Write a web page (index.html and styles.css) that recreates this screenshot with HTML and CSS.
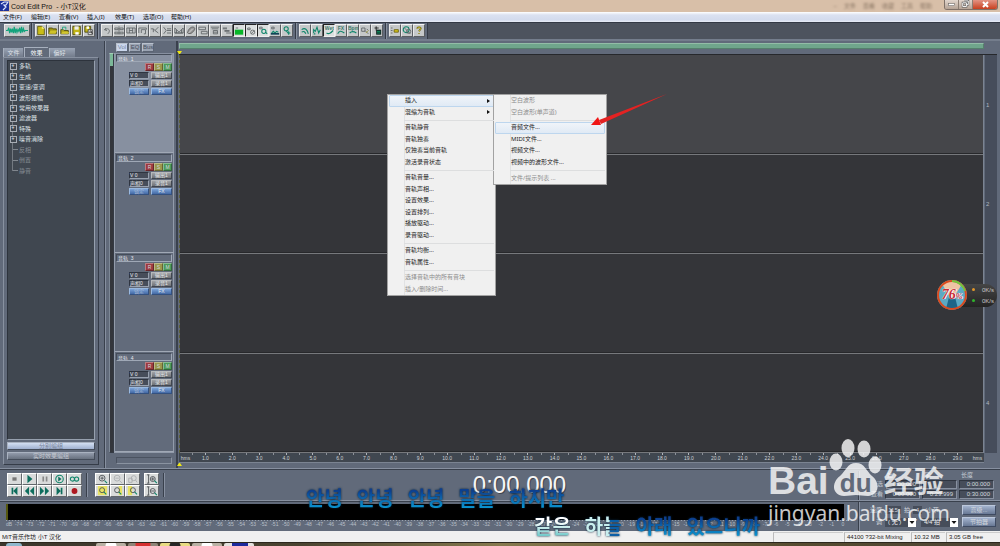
FILE: index.html
```html
<!DOCTYPE html>
<html lang="zh-CN">
<head>
<meta charset="utf-8">
<title>Cool Edit Pro - 小T汉化</title>
<link rel="stylesheet" href="styles.css">
</head>
<body>
<header class="titlebar">
  <svg class="app-icon" viewBox="0 0 9 10"><rect width="9" height="10" fill="#1c2f9a"/><path d="M1 3l3-2h4L6 4H4l2 2-3 3" fill="none" stroke="#dfe6ff" stroke-width="1.2"/></svg>
  <h1>Cool Edit Pro &nbsp;- 小T汉化</h1>
  <div class="ghost"><span>–</span><span>文件</span><span>查看</span><span>收藏</span><span>工具</span><span>帮助</span></div>
  <div class="win-buttons">
    <button aria-label="最小化"><svg viewBox="0 0 14 9"><rect x="4" y="4" width="6" height="2" fill="#fff" stroke="#555" stroke-width=".5"/></svg></button>
    <button aria-label="还原"><svg viewBox="0 0 14 9"><path d="M6 1h4v4H8M4 3h4v4H4z" fill="none" stroke="#555" stroke-width="2"/><path d="M6 1h4v4H8M4 3h4v4H4z" fill="none" stroke="#fff"/></svg></button>
    <button class="close" aria-label="关闭"><svg viewBox="0 0 24 9"><path d="M10 2l5 5M15 2l-5 5" stroke="#fff" stroke-width="2"/></svg></button>
  </div>
</header>
<nav class="menubar">
  <button>文件(F)</button><button>编辑(E)</button><button>查看(V)</button><button>插入(I)</button><button>效果(T)</button><button>选项(O)</button><button>帮助(H)</button>
</nav>
<div class="toolbar">
  <div class="tools first">
    <button class="wide" aria-label="波形"><svg viewBox="0 0 26 12"><path d="M1 6h2l1-3 1 6 1-5 1 4 1-4 1 5 1-7 1 7 1-5 1 4 1-3 1 2 1-4 1 6 1-7 1 6 1-4 1 3 1-1h3" fill="none" stroke="#12a37c" stroke-width="1.3"/></svg></button>
  </div>
  <div class="tools">
    <button aria-label="新建"><svg viewBox="0 0 12 12"><path d="M2 1h5l3 3v7H2z" fill="#c9bd18" stroke="#5d5710"/><path d="M7 1v3h3" fill="#fff67a"/></svg></button>
    <button aria-label="打开"><svg viewBox="0 0 12 12"><path d="M1 3h4l1 1h4v6H1z" fill="#9f9412" stroke="#4b460a"/><path d="M3 6h8l-2 4H1z" fill="#cfc228"/></svg></button>
    <button aria-label="追加"><svg viewBox="0 0 12 12"><path d="M1 5h3l1 1h5v4H1z" fill="#b9ad1c" stroke="#4b460a"/><path d="M3 5V2h4v3" fill="none" stroke="#14a37d"/><path d="M3 8h8l-1 2H1z" fill="#ddd238"/></svg></button>
    <button aria-label="保存"><svg viewBox="0 0 12 12"><path d="M1 1h9v10H1z" fill="#c2b618" stroke="#4b460a"/><path d="M3 1h5v4H3z" fill="#eee"/><path d="M4 8h4v3H4z" fill="#fff"/></svg></button>
    <button aria-label="全部保存"><svg viewBox="0 0 12 12"><path d="M1 1h7v7H1z" fill="#c2b618" stroke="#4b460a"/><path d="M3 1h3v3H3z" fill="#fff"/><path d="M5 5h5v6H5z" fill="#ddd" stroke="#444"/><path d="M6 8h3M8 6l2 4" stroke="#222"/></svg></button>
  </div>
  <div class="tools">
    <button aria-label="撤销"><svg viewBox="0 0 12 12"><path d="M3 5l2-2M3 5l3 1M3 5c5-3 8 1 4 5" class="g"/></svg></button>
    <button aria-label="中心"><svg viewBox="0 0 12 12"><path d="M1 3h4v2H1zM7 3h4v2H7zM1 8h4v2H1zM7 8h4v2H7zM6 1v10" class="g"/></svg></button>
    <button aria-label="选择"><svg viewBox="0 0 12 12"><path d="M1 3h10v6H1zM4 3v6M8 3v6M4 6h4" class="g"/></svg></button>
    <button aria-label="修剪"><svg viewBox="0 0 12 12"><path d="M1 9V3h9v2M4 9V5h5v5H7" class="g"/></svg></button>
    <button aria-label="分割"><svg viewBox="0 0 12 12"><path d="M1 4h3l2 2 4-4M6 6l4 3M4 4v4" class="g"/></svg></button>
    <button aria-label="合并"><svg viewBox="0 0 12 12"><path d="M2 2l3 4-3 4M6 4h5M6 6h5M6 9h5" class="g"/></svg></button>
    <button aria-label="淡化"><svg viewBox="0 0 12 12"><path d="M1 9V3l5 5 5-5v6zM1 9h10M3 5v4M9 5v4" class="g"/></svg></button>
    <button aria-label="擦除"><svg viewBox="0 0 12 12"><path d="M2 9c0-4 4-8 7-7s1 4-1 6-4 2-6 1z" fill="#999" stroke="#555"/><path d="M3 9l5-5" stroke="#ddd"/></svg></button>
    <button aria-label="编组"><svg viewBox="0 0 12 12"><path d="M1 2h8v3H1zM4 7h7v3H4z" class="g"/></svg></button>
    <button aria-label="锁定"><svg viewBox="0 0 12 12"><path d="M1 2h10M2 4h8M4 6h5v4H4zM4 8h5" class="g"/></svg></button>
    <button aria-label="对齐"><svg viewBox="0 0 12 12"><path d="M1 3h5M3 6h6M5 9h6M1 4h5M3 7h6" class="g"/></svg></button>
    <button class="on" aria-label="音块"><svg viewBox="0 0 12 12"><rect x="1" y="5" width="10" height="6" fill="#08b629"/><path d="M2 3h3" class="g"/></svg></button>
    <button class="on" aria-label="循环"><svg viewBox="0 0 12 12"><path d="M2 3h3v2H2z" class="g"/><circle cx="8" cy="8" r="2.5" class="g"/><path d="M6 10l4-4" class="g"/></svg></button>
    <button class="on" aria-label="包络"><svg viewBox="0 0 12 12"><path d="M2 2h3v2H2z" class="g"/><circle cx="7" cy="7" r="2.5" class="t"/><path d="M9 8l2 2" class="t"/></svg></button>
    <button aria-label="增益"><svg viewBox="0 0 12 12"><path d="M2 2h3v2H2z" class="g"/><path d="M2 9l2-2 2 2 2-2 2 1" class="t"/><path d="M1 10h10" stroke="#145" stroke-width="2"/></svg></button>
    <button aria-label="查找"><svg viewBox="0 0 12 12"><circle cx="5" cy="4" r="2.5" class="t"/><path d="M5 6l2 3h3M8 7v4" class="t"/></svg></button>
  </div>
  <div class="tools">
    <button aria-label="混响"><svg viewBox="0 0 12 12"><path d="M2 5c4-3 7 0 8 5M2 8c3-2 4 0 5 2" class="t"/></svg></button>
    <button aria-label="音高"><svg viewBox="0 0 12 12"><path d="M2 9V5l2 2 2-5 2 7 2-4M2 10h2" class="t"/></svg></button>
    <button class="on" aria-label="混音"><svg viewBox="0 0 12 12"><text x="1" y="5">Wet</text><path d="M3 9c3 2 5 0 8-3" class="t"/></svg></button>
    <button aria-label="效果"><svg viewBox="0 0 12 12"><text x="2" y="5">FX</text><path d="M2 10c2-4 4-4 8-1" class="t"/></svg></button>
    <button aria-label="节拍"><svg viewBox="0 0 12 12"><text x="0" y="5">Bpm</text><path d="M2 9c2-2 5-2 8 0" class="t"/></svg></button>
    <button aria-label="交叉"><svg viewBox="0 0 12 12"><path d="M2 3h4v4H2zM6 6l4 4M8 4l2 2" class="g"/><path d="M7 9l3-3" stroke="#a6a030"/></svg></button>
    <button aria-label="输出"><svg viewBox="0 0 12 12"><path d="M3 3h5M5 1v5" stroke="#111"/><rect x="5" y="5" width="6" height="6" fill="#122"/><path d="M6 7h4M6 9h4" stroke="#0ca76a"/></svg></button>
  </div>
  <div class="tools">
    <button aria-label="属性"><svg viewBox="0 0 12 12"><path d="M1 3h2M1 6h2M1 9h2" class="g"/><path d="M5 5h5v3H5z" fill="#d4c31a" stroke="#665d10"/></svg></button>
    <button aria-label="光盘"><svg viewBox="0 0 12 12"><circle cx="5" cy="5" r="3.5" class="t"/><circle cx="8" cy="7" r="2.5" class="g"/><path d="M3 3l7 7" class="g"/></svg></button>
    <button aria-label="帮助"><svg viewBox="0 0 12 12"><path d="M4 4c0-3 5-2 4 0L6 7M6 9v1" fill="none" stroke="#695e13" stroke-width="2"/><path d="M4 4c0-3 5-2 4 0L6 7M6 9v1" fill="none" stroke="#d1c52c"/></svg></button>
  </div>
</div>

<main class="workspace">
  <aside class="organizer">
    <div class="tabs"><button>文件</button><button class="active">效果</button><button>偏好</button></div>
    <div class="pane">
      <div class="tree-box">
        <ul class="tree">
          <li class="node">多轨</li><li class="node">生成</li><li class="node">变速/变调</li><li class="node">波形振幅</li><li class="node">常用效果器</li><li class="node">滤波器</li><li class="node">特殊</li><li class="node">噪音消除</li><li>反相</li><li>倒置</li><li>静音</li>
        </ul>
      </div>
      <button class="bar lit">分别编组</button>
      <button class="bar">实时效果编组</button>
    </div>
  </aside>

  <section class="mixer">
    <div class="mix-tabs"><button class="active">Vol</button><button>EQ</button><button>Bus</button></div>
    <div class="strips">
      <div class="level"></div>
      <div class="strip-list">
        <div class="strip sel">
          <input value="音轨  1" aria-label="音轨 1 名称">
          <div class="rsm"><button class="r">R</button><button class="s">S</button><button class="m">M</button></div>
          <div class="knobs"><button class="dark">V 0</button><button>输出1</button><button class="dark">声相0</button><button>录音1</button><button class="blue dim">锁定</button><button class="blue">FX</button></div>
        </div>
        <div class="strip">
          <input value="音轨  2" aria-label="音轨 2 名称">
          <div class="rsm"><button class="r">R</button><button class="s">S</button><button class="m">M</button></div>
          <div class="knobs"><button class="dark">V 0</button><button>输出1</button><button class="dark">声相0</button><button>录音1</button><button class="blue dim">锁定</button><button class="blue">FX</button></div>
        </div>
        <div class="strip">
          <input value="音轨  3" aria-label="音轨 3 名称">
          <div class="rsm"><button class="r">R</button><button class="s">S</button><button class="m">M</button></div>
          <div class="knobs"><button class="dark">V 0</button><button>输出1</button><button class="dark">声相0</button><button>录音1</button><button class="blue dim">锁定</button><button class="blue">FX</button></div>
        </div>
        <div class="strip">
          <input value="音轨  4" aria-label="音轨 4 名称">
          <div class="rsm"><button class="r">R</button><button class="s">S</button><button class="m">M</button></div>
          <div class="knobs"><button class="dark">V 0</button><button>输出1</button><button class="dark">声相0</button><button>录音1</button><button class="blue dim">锁定</button><button class="blue">FX</button></div>
        </div>
      </div>
    </div>
    <div class="mix-scroll"></div>
  </section>

  <section class="session">
    <div class="overview"></div>
    <div class="marker top"></div>
    <div class="canvas">
      <div class="lanes"><div class="lane sel"></div><div class="lane"></div><div class="lane"></div><div class="lane"></div></div>
      <div class="lane-nums"><span>1</span><span>2</span><span>3</span><span>4</span></div>
    </div>
    <div class="ruler">
      <span class="unit">hms</span>
      <div class="marks"><i>1.0</i><i>2.0</i><i>3.0</i><i>4.0</i><i>5.0</i><i>6.0</i><i>7.0</i><i>8.0</i><i>9.0</i><i>10.0</i><i>11.0</i><i>12.0</i><i>13.0</i><i>14.0</i><i>15.0</i><i>16.0</i><i>17.0</i><i>18.0</i><i>19.0</i><i>20.0</i><i>21.0</i><i>22.0</i><i>23.0</i><i>24.0</i><i>25.0</i><i>26.0</i><i>27.0</i><i>28.0</i><i>29.0</i></div>
      <span class="unit">hms</span>
    </div>
    <div class="marker bottom"></div>
  </section>
</main>

<section class="transport">
  <div class="pad five">
    <button aria-label="停止"><svg viewBox="0 0 15 12"><rect x="5" y="4" width="5" height="4" fill="#777"/></svg></button>
    <button aria-label="播放"><svg viewBox="0 0 15 12"><path d="M5 1l6 5-6 5z" class="f"/></svg></button>
    <button aria-label="暂停"><svg viewBox="0 0 15 12"><path d="M5 3h2v6H5zM9 3h2v6H9z" fill="#888"/></svg></button>
    <button aria-label="播放到结尾"><svg viewBox="0 0 15 12"><circle cx="7.500" cy="6" r="4.500" class="t"/><path d="M6 3l4 3-4 3z" class="f"/></svg></button>
    <button aria-label="循环播放"><svg viewBox="0 0 15 12"><circle cx="5" cy="6" r="2.500" class="t" stroke-width="1.500"/><circle cx="10" cy="6" r="2.500" class="t" stroke-width="1.500"/></svg></button>
    <button aria-label="到开头"><svg viewBox="0 0 15 12"><path d="M4 2h2v8H4zM11 1v10L6 6z" class="f"/></svg></button>
    <button aria-label="倒带"><svg viewBox="0 0 15 12"><path d="M7 1v10L2 6zM13 1v10L8 6z" class="f"/></svg></button>
    <button aria-label="快进"><svg viewBox="0 0 15 12"><path d="M2 1v10l5-5zM8 1v10l5-5z" class="f"/></svg></button>
    <button aria-label="到结尾"><svg viewBox="0 0 15 12"><path d="M4 1v10l5-5zM9 2h2v8H9z" class="f"/></svg></button>
    <button aria-label="录音"><svg viewBox="0 0 15 12"><circle cx="7.500" cy="6" r="3.500" fill="#ad1820"/></svg></button>
  </div>
  <div class="pad three">
    <button aria-label="放大"><svg viewBox="0 0 15 12"><circle cx="7" cy="5" r="3.500" class="k"/><path d="M5 5h4M7 3v4" class="k"/><path d="M10 8l3 3" class="t"/></svg></button>
    <button aria-label="缩小"><svg viewBox="0 0 15 12"><circle cx="7" cy="5" r="3.500" class="l"/><path d="M5 5h4M10 8l3 3" class="l"/></svg></button>
    <button aria-label="全部"><svg viewBox="0 0 15 12"><circle cx="9" cy="5" r="3" class="l"/><path d="M3 5h4v5H3zM11 7l2 3" class="l"/></svg></button>
    <button aria-label="缩放选区"><svg viewBox="0 0 15 12"><rect x="2" y="0" width="11" height="11" fill="#e7e266"/><circle cx="7" cy="5" r="3" class="k"/><path d="M9 7l3 3" class="t"/></svg></button>
    <button aria-label="缩放左侧"><svg viewBox="0 0 15 12"><rect x="9" y="0" width="4" height="11" fill="#e7e266"/><circle cx="7" cy="5" r="3" class="k"/><path d="M9 7l3 3" class="t"/></svg></button>
    <button aria-label="缩放右侧"><svg viewBox="0 0 15 12"><rect x="2" y="0" width="5" height="11" fill="#e7e266"/><circle cx="8" cy="5" r="3" class="k"/><path d="M10 7l3 3" class="t"/></svg></button>
  </div>
  <div class="pad one">
    <button aria-label="垂直放大"><svg viewBox="0 0 15 12"><path d="M2 1h3M4 1v10M2 11h3" class="k"/><circle cx="9" cy="6" r="3" class="k"/><path d="M7 6h4M9 4v4" class="k"/><path d="M11 8l3 3" class="t"/></svg></button>
    <button aria-label="垂直缩小"><svg viewBox="0 0 15 12"><path d="M2 1h3M4 1v10M2 11h3" class="k"/><circle cx="9" cy="6" r="3" class="k"/><path d="M7 6h4" class="k"/><path d="M11 8l3 3" class="t"/></svg></button>
  </div>
  <output class="clock">0:00.000</output>
  <table class="times">
    <thead><tr><th></th><th>始</th><th>尾</th><th>长度</th></tr></thead>
    <tbody>
      <tr><th>选</th><td>0:00.000</td><td></td><td>0:00.000</td></tr>
      <tr><th>查看</th><td>0:00.000</td><td>0:29.999</td><td>0:30.000</td></tr>
    </tbody>
  </table>
</section>

<section class="meters">
  <div class="meter">
    <div class="meter-bar"></div>
    <div class="db"><b>dB</b><i>-74</i><i>-73</i><i>-72</i><i>-71</i><i>-70</i><i>-69</i><i>-68</i><i>-67</i><i>-66</i><i>-65</i><i>-64</i><i>-63</i><i>-62</i><i>-61</i><i>-60</i><i>-59</i><i>-58</i><i>-57</i><i>-56</i><i>-55</i><i>-54</i><i>-53</i><i>-52</i><i>-51</i><i>-50</i><i>-49</i><i>-48</i><i>-47</i><i>-46</i><i>-45</i><i>-44</i><i>-43</i><i>-42</i><i>-41</i><i>-40</i><i>-39</i><i>-38</i><i>-37</i><i>-36</i><i>-35</i><i>-34</i><i>-33</i><i>-32</i><i>-31</i><i>-30</i><i>-29</i><i>-28</i><i>-27</i><i>-26</i><i>-25</i><i>-24</i><i>-23</i><i>-22</i><i>-21</i><i>-20</i><i>-19</i><i>-18</i><i>-17</i><i>-16</i><i>-15</i><i>-14</i><i>-13</i><i>-12</i><i>-11</i><i>-10</i><i>-9</i><i>-8</i><i>-7</i><i>-6</i><i>-5</i><i>-4</i><i>-3</i><i>-2</i><i>-1</i><i>0</i></div>
  </div>
  <div class="tempo">
    <div class="line"><label for="bpm">速度</label><input id="bpm" value="115"><span>拍</span><input class="short" aria-label="小节" value="4"><span>/小节</span><button>高级...</button></div>
    <div class="line"><label for="key">调</label><select id="key"><option>( 无 )</option></select><select class="sig" aria-label="拍号"><option>4/4 拍</option></select><button>节拍器</button></div>
  </div>
</section>

<footer class="status"><span class="msg">MiT音乐作坊 小T 汉化</span><span class="blank"></span><span class="fmt">44100 ?32-bit Mixing</span><span class="mem">10.32 MB</span><span class="disk">3.05 GB free</span></footer>
<div class="taskbar"><span class="orb"></span><span class="task"></span><span class="task red"></span><span class="task gold"></span><span class="task"></span><span class="task navy"></span></div>

<div class="context">
  <ul class="menu">
    <li class="group two"><button class="hot sub">插入</button><button class="sub">混缩为音轨</button></li>
    <li class="group four"><button>音轨静音</button><button>音轨独奏</button><button>仅独奏当前音轨</button><button>激活录音状态</button></li>
    <li class="group six"><button>音轨音量...</button><button>音轨声相...</button><button>设置效果...</button><button>设置排列...</button><button>播放驱动...</button><button>录音驱动...</button></li>
    <li class="group two"><button>音轨均衡...</button><button>音轨属性...</button></li>
    <li class="group two"><button disabled>选择音轨中的所有音块</button><button disabled>插入/删除时间...</button></li>
  </ul>
  <ul class="menu submenu">
    <li class="group two"><button disabled>空白波形</button><button disabled>空白波形(单声道)</button></li>
    <li class="group four"><button class="hot">音频文件...</button><button>MIDI文件...</button><button>视频文件...</button><button>视频中的波形文件...</button></li>
    <li class="group single"><button disabled>文件/提示列表 ...</button></li>
  </ul>
  <svg class="arrow" viewBox="0 0 76 34"><path d="M76 0L8 26l2 4z" fill="#e32222"/><path d="M0 31l7-8 3 8z" fill="#f01616"/></svg>
</div>

<div class="gadget">
  <div class="rates"><span class="up">0K/s</span><span class="down">0K/s</span></div>
  <div class="dial"><svg viewBox="0 0 32 32"><circle cx="16" cy="16" r="15" fill="#5ba9c4"/><path d="M6 5q10-7 20 0l-8 13h-4z" fill="#efc3a4"/><path d="M13 18h6l3 12h-12z" fill="#1d6588"/><circle cx="16" cy="16" r="14" fill="none" stroke="#db4a1e" stroke-width="2"/><path d="M16 2a14 14 0 0 1 13 10" fill="none" stroke="#72c63f" stroke-width="2"/></svg><span>76<small>%</small></span></div>
</div>

<div class="watermark">
  <div class="brand"><span>Bai</span>
    <span class="paw"><svg viewBox="0 0 54 58"><ellipse cx="7" cy="23" rx="6.500" ry="8.500"/><ellipse cx="19" cy="9" rx="6.500" ry="9"/><ellipse cx="35" cy="10" rx="6.500" ry="8.500"/><ellipse cx="46" cy="26" rx="6.500" ry="8.500"/><path d="M27 24c9 0 10 8 16 13 8 6 8 19-4 20-5 0-8-1-12-1s-7 1-12 1C3 56 2 44 11 37c6-5 7-13 16-13z"/></svg><em>du</em></span>
    <span class="cn">经验</span></div>
  <div class="site">jingyan.baidu.com</div>
</div>

<div class="lyrics" lang="ko">
  <p><span>안녕</span><span>안녕</span><span>안녕</span><span>말을</span><span>하지만</span></p>
  <p class="next"><span class="sung">같은</span><span class="half">하늘</span><span>아래</span><span>있으니까</span></p>
</div>
</body>
</html>
```
FILE: styles.css
```css
* { box-sizing: border-box; }
html { height: 100%; }
body {
  margin: 0; min-height: 100%; position: relative; overflow: hidden;
  display: grid; grid-template-columns: minmax(0, 1fr);
  grid-template-rows: 12px 10px 19px 1fr 32px 30px 11px 4px;
  background: #616a7a; color: #d3d8df;
  font: 6px/8px "Liberation Sans", "Noto Sans CJK SC", sans-serif;
}
button, input, select { font: inherit; color: inherit; margin: 0; padding: 0; border: 0; border-radius: 0; background: none; min-width: 0; display: block; }
ul { list-style: none; margin: 0; padding: 0; }
svg { display: block; }
i, em { font-style: normal; }

.titlebar { display: flex; align-items: center; background: #d8bfa8; color: #111; }
.app-icon { width: 9px; height: 10px; }
.titlebar h1 { margin: 0 auto 0 2px; font: 7px/11px "Liberation Sans", "Noto Sans CJK SC", sans-serif; }
.ghost { display: flex; gap: 7px; margin-right: 12px; color: #8b7765; filter: blur(1px); }
.win-buttons { display: flex; align-self: flex-start; margin-right: 2px; border: 1px solid #7f7168; border-top: 0; border-radius: 0 0 3px 3px; overflow: hidden; }
.win-buttons button { width: 14px; height: 9px; background: linear-gradient(#e3d7ce, #b5a396); border-right: 1px solid #8b7d72; }
.win-buttons .close { width: 24px; border: 0; background: linear-gradient(#e39383, #c8401f); }

.menubar { display: flex; gap: 7px; padding-left: 3px; background: linear-gradient(#fff, #dbe1f0 30%, #d3dbed 80%, #e9edf6); color: #111; font-family: "Noto Sans", "Noto Sans CJK SC", sans-serif; }
.menubar button { font-size: 6px; line-height: 10px; width: 21px; white-space: nowrap; text-align: left; }

.toolbar { display: flex; background: #4d535e; border-bottom: 2px solid #747d8c; border-top: 1px solid #333945; }
.tools { display: flex; padding: 1px 2px; background: #616a7a; border-left: 1px solid #87909f; border-right: 1px solid #343a46; }
.tools.first { padding: 1px 1px 1px 4px; border-left: 0; }
.tools button { width: 12px; height: 13px; background: #c5c8c9; border: 1px solid; border-color: #f4f4f4 #5b5e62 #5b5e62 #e8e8e8; }
.tools .wide { width: 26px; }
.tools .on { background: #dcdfdf; border-color: #222 #eee #eee #222; }
.tools svg { width: 100%; height: 100%; }
.tools text { font: bold 6px "Liberation Sans", sans-serif; fill: #3d7a6b; }
.g { fill: none; stroke: #5d6164; }
.t { fill: none; stroke: #10866b; stroke-width: 1.3; }
.k { fill: none; stroke: #474b4f; }
.l { fill: none; stroke: #a8abad; }
.f { fill: #0d6d5d; }

.workspace { display: grid; grid-template-columns: 105px 73px minmax(0, 1fr); min-height: 0; border-bottom: 1px solid #8790a0; }

.organizer { display: flex; flex-direction: column; padding: 6px 5px 3px 3px; border-right: 1px solid #39404c; }
.tabs { display: flex; gap: 1px; align-items: flex-end; height: 10px; }
.tabs button { width: 20px; height: 9px; background: linear-gradient(#99a3b4, #737c8b); border-left: 1px solid #a7b0be; color: #dde1e7; }
.tabs .active { width: 24px; height: 10px; background: #616a7a; color: #f4f6f8; border-top: 1px solid #a7b0be; }
.tabs button:last-child { width: 26px; padding-right: 6px; }
.pane { flex: 1; display: flex; flex-direction: column; gap: 2px; padding: 2px 3px 4px; border: 1px solid #8891a0; border-right-color: #353c48; border-bottom-color: #353c48; }
.tree-box { flex: 1; background: #404750; border: 1px solid #2d333c; border-right: 1px solid #96a0ae; border-bottom: 1px solid #96a0ae; }
.tree { height: 115px; margin-left: 2px; display: flex; flex-direction: column; position: relative; }
.tree li { flex: 1; display: flex; align-items: center; gap: 2px; color: #858b93; }
.tree li::before { content: ""; width: 5px; height: 1px; margin-left: 3px; margin-right: -1px; background: #80868e; }
.tree .node { color: #dde1e6; }
.tree .node::before { content: "+"; width: 5px; height: 5px; margin: 0; border: 1px solid #a8adb5; background: #404750; font: bold 5px/3px "Liberation Sans", sans-serif; text-align: center; z-index: 1; text-indent: -1px; }
.tree::before { content: ""; position: absolute; left: 2px; top: 5px; bottom: 5px; width: 1px; background: #737981; }
.bar { height: 8px; background: linear-gradient(#929bab, #68717f); border: 1px solid; border-color: #a9b2c0 #444c59 #444c59 #a9b2c0; line-height: 6px; color: #c3c8d0; }
.bar.lit { background: linear-gradient(#d3dff2, #9fb0cf); color: #77829a; }

.mixer { display: flex; flex-direction: column; padding: 2px 0 0 3px; border-left: 1px solid #8790a0; border-right: 2px solid #3a414d; }
.mix-tabs { display: flex; gap: 1px; padding-left: 7px; height: 10px; }
.mix-tabs button { width: 12px; height: 9px; background: #9aa3b2; color: #48505e; border: 1px solid; border-color: #b9c1cd #5b6473 #5b6473 #b9c1cd; line-height: 7px; }
.mix-tabs .active { background: #cad6ec; color: #7a89a4; }
.strips { flex: 1; display: flex; margin-right: 2px; }
.level { width: 5px; background: linear-gradient(#7bb898 12px, #33363c 12px); border: 1px solid #343a44; border-top-color: #a4cdb7; border-left-color: #7c8795; }
.strip-list { flex: 1; display: flex; flex-direction: column; border-left: 1px solid #929baa; border-bottom: 1px solid #929baa; }
.strip { flex: 1; display: flex; flex-direction: column; align-items: flex-end; gap: 1px; padding: 1px 1px 0 1px; border-bottom: 1px solid #a0a8b5; border-right: 1px solid #929baa; background: #626b7b; }
.strip.sel { background: #8790a0; }
.strip input { width: 100%; height: 8px; padding-left: 1px; line-height: 6px; font-size: 5px; color: #e6e9ee; border: 1px solid; border-color: #454d5a #9fa8b6 #9fa8b6 #454d5a; white-space: pre; }
.rsm { display: flex; }
.rsm button { width: 9px; height: 8px; border: 1px solid; border-color: #ffffff55 #00000055 #00000055 #ffffff55; font-size: 5px; line-height: 6px; }
.r { background: #9c3a40; } .s { background: #9a974c; } .m { background: #4c9a5a; }
.knobs { display: grid; grid-template-columns: 20px 21px; grid-auto-rows: 7px; gap: 1px 2px; }
.knobs button { background: linear-gradient(#a0a2a5, #6e7175); border: 1px solid; border-color: #b5b8bb #404650 #404650 #b5b8bb; font-size: 5px; line-height: 5px; color: #e5e8eb; white-space: nowrap; }
.knobs .dark { background: #464d5a; border-color: #2f3540 #98a1af #98a1af #2f3540; text-align: left; }
.knobs .blue { background: linear-gradient(#7ba3d8, #4369a5); border-color: #9ab9e0 #34517f #34517f #9ab9e0; }
.knobs .dim { color: #a9bbd5; }
.mix-scroll { height: 7px; margin: 4px 4px 4px 7px; border: 1px solid; border-color: #4a5260 #8a93a1 #8a93a1 #4a5260; }

.session { display: flex; flex-direction: column; padding: 2px 3px 0 1px; min-width: 0; }
.overview { height: 6px; margin-right: 13px; background: #70a68c; border: 1px solid; border-color: #93bda7 #55806c #55806c #93bda7; }
.marker { width: 5px; height: 3px; margin-left: -2px; background: #efe812; clip-path: polygon(0 0, 100% 0, 60% 100%, 40% 100%); }
.marker.top { margin-top: 2px; }
.marker.bottom { clip-path: polygon(40% 0, 60% 0, 100% 100%, 0 100%); margin-bottom: 2px; }
.canvas { flex: 1; display: grid; grid-template-columns: minmax(0, 1fr) 13px; border-top: 1px solid #26282c; }
.lanes { display: flex; flex-direction: column; border-left: 1px dashed #5e6137; border-right: 1px solid #7b8492; }
.lane { flex: 1; background: #343539; border-bottom: 1px solid #76787c; box-shadow: inset 0 -1px #27282b; }
.lane.sel { background: #45464a; }
.lane-nums { display: grid; grid-template-rows: repeat(4, 1fr); background: #464d5b; margin-left: 1px; color: #aeb5bf; }
.lane-nums span { align-self: center; padding-left: 1px; }
.ruler { height: 10px; display: flex; margin-right: 13px; background: #404750; border-bottom: 1px solid #7b8492; color: #cfd2d6; font-size: 5px; line-height: 10px; }
.unit { width: 13px; text-align: center; }
.marks { flex: 1; display: flex; }
.marks i { flex: 1; text-align: center; min-width: 0; background: linear-gradient(#aeb3ba, #aeb3ba) 50% 0 / 1px 2px no-repeat, linear-gradient(#8b9098, #8b9098) 0 0 / 1px 2px no-repeat; }

.transport { display: flex; align-items: flex-start; padding-top: 3px; border-top: 1px solid #39404c; border-bottom: 1px solid #8790a0; }
.pad { display: grid; }
.pad button { width: 15px; height: 12px; background: #d9dbdb; border: 1px solid; border-color: #fff #62666b #62666b #fff; }
.pad svg { width: 100%; height: 100%; }
.five { grid-template-columns: repeat(5, 15px); margin-left: 7px; padding-right: 4px; box-shadow: 1px 0 #39404c, 2px 0 #8790a0; }
.three { grid-template-columns: repeat(3, 15px); margin-left: 9px; }
.one { grid-template-columns: 15px; margin-left: 4px; padding-right: 4px; box-shadow: 1px 0 #39404c, 2px 0 #8790a0; }
.clock { flex: 1; text-align: center; padding-left: 18px; font-size: 24px; line-height: 24px; color: #f6f6f6; text-shadow: 1px 1px #41464f; }
.times { width: 142px; border-spacing: 2px 1px; padding: 0 4px 0 2px; margin-top: -2px; table-layout: fixed; border-left: 1px solid #39404c; box-shadow: inset 1px 0 #8790a0; }
.times th { font-weight: normal; height: 7px; line-height: 7px; padding: 0; text-align: left; padding-left: 2px; color: #c4cad3; white-space: nowrap; }
.times th:first-child { width: 20px; text-align: right; padding: 0; }
.times td { height: 9px; line-height: 7px; padding: 0 3px 0 0; text-align: right; background: #464d5a; border: 1px solid; border-color: #2f3540 #8790a0 #8790a0 #2f3540; white-space: nowrap; overflow: hidden; }

.meters { display: grid; grid-template-columns: minmax(0, 1fr) 142px; border-top: 1px solid #39404c; }
.meter { padding: 2px 9px 0 6px; }
.meter-bar { height: 16px; margin-right: 5px; background: #000; border-left: 2px solid #55570f; }
.db { display: flex; font-size: 5px; line-height: 8px; color: #b9c0ca; background: repeating-linear-gradient(90deg, #9aa2af 0 1px, transparent 1px 3px) 0 0 / 100% 1px no-repeat; }
.db b { width: 7px; font-weight: normal; }
.db i { flex: 1; min-width: 0; text-align: center; white-space: nowrap; }
.tempo { border-left: 1px solid #39404c; box-shadow: inset 1px 0 #8790a0; padding: 3px 4px 0 8px; display: flex; flex-direction: column; gap: 2px; }
.line { display: flex; align-items: center; gap: 3px; height: 10px; white-space: nowrap; }
.line label { width: 15px; text-align: right; }
.line input { width: 16px; height: 8px; background: #464d5a; text-align: center; }
.line .short { width: 9px; }
.line button { width: 34px; height: 10px; margin-left: auto; background: linear-gradient(#a3b3ce, #687894); border: 1px solid; border-color: #bcc8dc #3f4b62 #3f4b62 #bcc8dc; }
.line select { appearance: none; width: 31px; height: 9px; padding-left: 3px; line-height: 8px; color: #eceff2; background: #464d5a url("data:image/svg+xml,%3Csvg xmlns='http://www.w3.org/2000/svg' viewBox='0 0 8 9'%3E%3Crect width='8' height='9' fill='%23fff'/%3E%3Cpath d='M1.500 3h5L4 6z' fill='%23111'/%3E%3C/svg%3E") 100% 0 / 8px 9px no-repeat; }
.line .sig { width: 37px; margin-left: 2px; }

.status { display: grid; grid-template-columns: minmax(0, 1fr) 70px 66px 34px 54px; gap: 1px; background: #f0f0f0; color: #222; line-height: 10px; padding-top: 1px; white-space: nowrap; }
.status span { padding-left: 2px; border-left: 1px solid #bbb; border-top: 1px solid #ccc; line-height: 8px; }
.status .msg { border: 0; line-height: 10px; }
.taskbar { display: flex; gap: 2px; background: linear-gradient(90deg, #3b362c, #4a4330 30%, #86794e 50%, #564b30 80%, #4c4435); border-top: 1px solid #2c271d; }
.orb { width: 16px; margin: 0 72px 0 6px; background: #8fb8cd; border-radius: 8px 8px 0 0; }
.task { width: 30px; background: radial-gradient(circle at 50% 100%, #fff 5px, #b9b1a4 6px); border-radius: 2px 2px 0 0; }
.task.red { background: radial-gradient(circle, #d63030 7px, #8f8578 8px); }
.task.gold { background: radial-gradient(circle at 50% 100%, #262626 5px, #e9dc84 6px); }
.task.navy { background: linear-gradient(90deg, #e4e2de 8px, #1d2a9c 8px 24px, #e4e2de 24px); }

.context { position: absolute; left: 387px; top: 94px; display: flex; align-items: flex-start; }
.menu { width: 109px; padding: 0 1px; background: #f0f0f0; border: 1px solid #a2a2a2; color: #222; box-shadow: inset 16px 0 #f1f1f1, inset 17px 0 #e1e2e3; font-family: "Noto Sans", "Noto Sans CJK SC", sans-serif; }
.submenu { width: 114px; margin-left: -3px; }
.group { display: flex; flex-direction: column; }
.group + .group { margin-top: 4px; position: relative; }
.group + .group::before { content: ""; position: absolute; left: 15px; right: 0; top: -2px; height: 1px; background: #dddedf; }
.two { height: 23px; } .four { height: 46px; } .six { height: 69px; } .single { height: 12px; }
.menu button { flex: 1; display: flex; align-items: center; padding-left: 15px; border: 1px solid transparent; border-radius: 1px; white-space: nowrap; line-height: 9px; }
.menu .hot { border-color: #bdd6ee; background: linear-gradient(#f0f4f9, #e0eaf5); }
.menu button:disabled { color: #8d8d8d; }
.menu .sub::after { content: ""; margin-left: auto; margin-right: 3px; border: 2px solid transparent; border-left: 3px solid #111; border-right: 0; }
.arrow { position: absolute; left: 204px; top: 0; width: 76px; height: 34px; }

.gadget { position: absolute; right: 3px; top: 279px; display: flex; align-items: center; flex-direction: row-reverse; }
.dial { position: relative; width: 32px; height: 32px; margin-right: -8px; z-index: 1; }
.dial span { position: absolute; inset: 0; text-align: center; font: italic bold 14px/32px "Liberation Serif", serif; color: #c62b38; text-shadow: 0 0 1px #fff, 0 0 1px #fff, 1px 0 #fff; }
.dial small { font-size: 8px; }
.rates { display: grid; gap: 3px; width: 37px; height: 23px; padding: 2px 3px 2px 12px; background: linear-gradient(#454545, #242424); border-radius: 0 12px 12px 0; text-align: right; color: #c8c8c8; }
.rates span { display: flex; justify-content: space-between; align-items: center; }
.rates span::before { content: ""; width: 3px; height: 3px; border-radius: 2px; background: #e2972a; }
.rates .down::before { background: #2fb52c; }

.watermark { position: absolute; right: 53px; bottom: 19px; width: 179px; color: #ffffffc8; }
.brand { display: flex; align-items: flex-end; height: 60px; font: bold 39px/36px "Liberation Sans", sans-serif; }
.paw { position: relative; width: 54px; height: 60px; }
.paw svg { width: 54px; height: 58px; fill: #ffffffc8; }
.paw em { position: absolute; left: 0; right: 0; bottom: 2px; text-align: center; font-size: 26px; line-height: 28px; color: #616a7a; }
.brand .cn { font: bold 30px/34px "Noto Sans CJK SC", sans-serif; margin: 0 0 3px 1px; }
.site { font: 21px/28px "Noto Sans", sans-serif; }

.lyrics { position: absolute; left: 306px; top: 484px; font: bold 20px/28px "Noto Sans CJK KR", sans-serif; filter: drop-shadow(0 0 1px #06243e); }
.lyrics p { display: flex; gap: 14px; margin: 0; }
.lyrics .next { margin-left: 228px; }
.lyrics span { color: transparent; background: linear-gradient(#0d3f8e 25%, #0a93cf 85%) text; }
.lyrics .sung { background: linear-gradient(#fff 35%, #6fc9c9 85%) text; }
.lyrics .half { background: linear-gradient(90deg, #c9eeee 65%, #0d5fa6 68%) text; }
```
